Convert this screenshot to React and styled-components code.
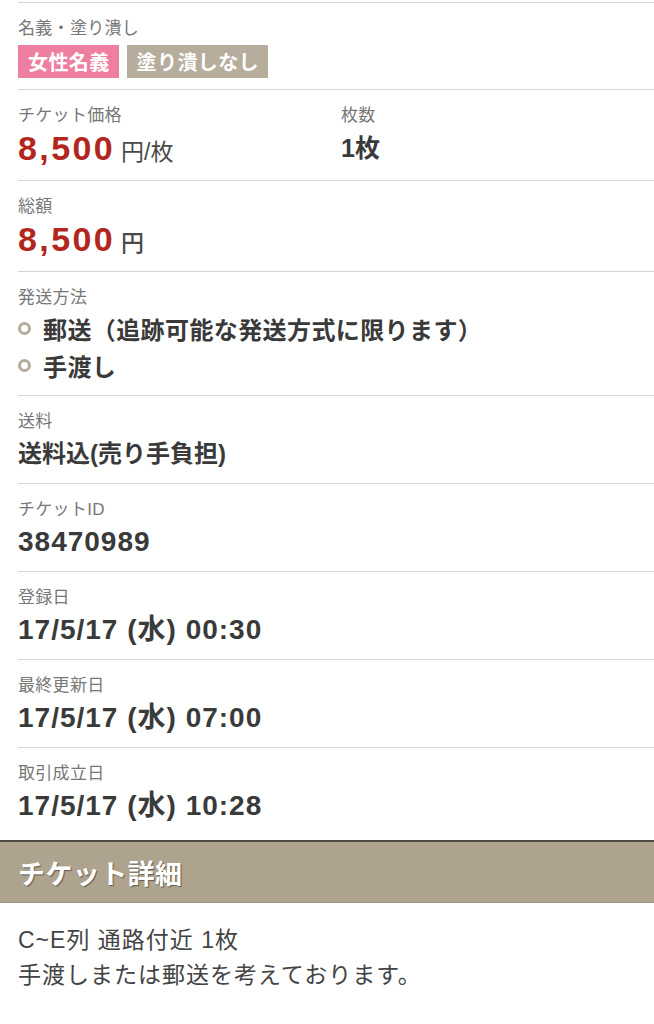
import React from "react";
import styled, { createGlobalStyle } from "styled-components";

const GlobalStyle = createGlobalStyle`
  html, body { margin: 0; padding: 0; background: #fff; }
  body {
    font-family: "Liberation Sans", "Noto Sans CJK JP", sans-serif;
    color: #3a3a3a;
    -webkit-font-smoothing: antialiased;
  }
`;

const Page = styled.div`
  width: 654px;
  padding-top: 2px;
  background: #fff;
`;

const List = styled.div`
  margin-left: 18px;
  border-top: 1px solid #d9d3ca;
`;

const Row = styled.div`
  padding: 14px 0 ${(p) => p.$pb ?? 11}px;
  border-bottom: ${(p) => (p.$last ? "none" : "1px solid #d9d3ca")};
`;

const Cols = styled.div`
  display: grid;
  grid-template-columns: 323px 1fr;
`;

const Label = styled.div`
  font-size: 17px;
  line-height: 24px;
  color: #777;
  font-weight: 400;
  letter-spacing: 0.3px;
`;

const Tags = styled.div`
  display: flex;
  gap: 8px;
  margin-top: 4px;
`;

const Tag = styled.span`
  display: inline-flex;
  align-items: center;
  height: 33px;
  padding: 0 9px 0 10px;
  font-size: 20px;
  font-weight: 700;
  letter-spacing: 0.4px;
  color: #fff;
  background: ${(p) => p.$color};
`;

const Value = styled.div`
  margin-top: ${(p) => (p.$big ? 0 : 2)}px;
  height: ${(p) => (p.$big ? 40 : 36)}px;
  font-size: ${(p) => p.$size ?? 24}px;
  line-height: ${(p) => (p.$big ? 40 : 36)}px;
  font-weight: 700;
  color: #3a3a3a;
  letter-spacing: ${(p) => p.$ls ?? 0}px;
  white-space: nowrap;
`;

const Price = styled.span`
  font-size: 34px;
  font-weight: 700;
  color: #b3261e;
  letter-spacing: 2.4px;
`;

const Unit = styled.span`
  font-size: 23px;
  font-weight: ${(p) => (p.$bold ? 500 : 400)};
  color: #4a4a4a;
  margin-left: 6px;
`;

const Options = styled.div`
  display: flex;
  flex-direction: column;
`;

const Option = styled.div`
  display: flex;
  align-items: center;
  gap: 12px;
  height: 37px;
  font-size: 24px;
  font-weight: 700;
  letter-spacing: 0.4px;
  color: #3a3a3a;
  white-space: nowrap;
`;

const Ring = styled.span`
  width: 13px;
  height: 13px;
  box-sizing: border-box;
  border-radius: 50%;
  border: 3px solid #b4ac9b;
  flex: none;
`;

const SectionHeader = styled.h2`
  margin: 16px 0 0;
  height: 63px;
  box-sizing: border-box;
  display: flex;
  align-items: center;
  padding-left: 18px;
  background: #ada38f;
  border-top: 2px solid #4e4a42;
  border-bottom: 1px solid #9d9482;
  font-size: 27px;
  font-weight: 700;
  letter-spacing: 0.4px;
  color: #fff;
  text-shadow: 1px 1px 1px rgba(0, 0, 0, 0.45);
`;

const Detail = styled.div`
  padding: 20px 18px 0;
  font-size: 23px;
  line-height: 35px;
  color: #444;
  font-weight: 400;
  letter-spacing: 1px;
`;

const dates = [
  ["登録日", "17/5/17 (水) 00:30"],
  ["最終更新日", "17/5/17 (水) 07:00"],
  ["取引成立日", "17/5/17 (水) 10:28"],
];

export default function App() {
  return (
    <Page>
      <GlobalStyle />
      <List>
        <Row>
          <Label>名義・塗り潰し</Label>
          <Tags>
            <Tag $color="#ef7fa1">女性名義</Tag>
            <Tag $color="#b6ad9d">塗り潰しなし</Tag>
          </Tags>
        </Row>
        <Row $pb={12}>
          <Cols>
            <div>
              <Label>チケット価格</Label>
              <Value $big>
                <Price>8,500</Price>
                <Unit>円/枚</Unit>
              </Value>
            </div>
            <div>
              <Label>枚数</Label>
              <Value $big $size={25}>1枚</Value>
            </div>
          </Cols>
        </Row>
        <Row $pb={12}>
          <Label>総額</Label>
          <Value $big>
            <Price>8,500</Price>
            <Unit $bold>円</Unit>
          </Value>
        </Row>
        <Row $pb={11}>
          <Label>発送方法</Label>
          <Options>
            <Option>
              <Ring />
              郵送（追跡可能な発送方式に限ります）
            </Option>
            <Option>
              <Ring />
              手渡し
            </Option>
          </Options>
        </Row>
        <Row>
          <Label>送料</Label>
          <Value>送料込(売り手負担)</Value>
        </Row>
        <Row>
          <Label>チケットID</Label>
          <Value $size={28} $ls={1}>38470989</Value>
        </Row>
        {dates.map(([label, value], i) => (
          <Row key={label} $last={i === dates.length - 1} $pb={i === dates.length - 1 ? 0 : 11}>
            <Label>{label}</Label>
            <Value $size={28} $ls={1}>{value}</Value>
          </Row>
        ))}
      </List>
      <SectionHeader>チケット詳細</SectionHeader>
      <Detail>
        C~E列 通路付近 1枚
        <br />
        手渡しまたは郵送を考えております。
      </Detail>
    </Page>
  );
}
